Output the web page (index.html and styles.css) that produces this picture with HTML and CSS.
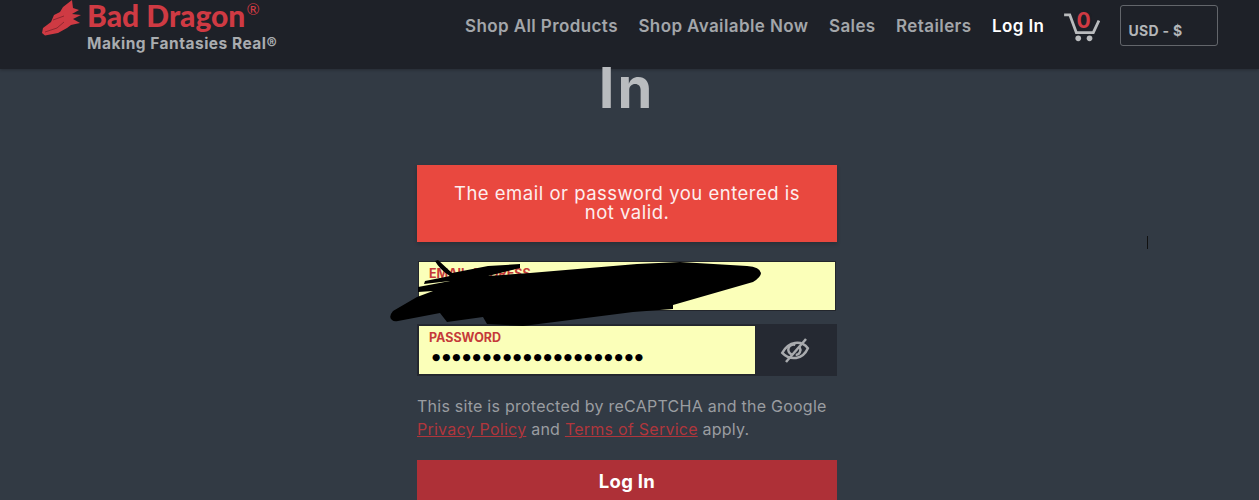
FILE: index.html
```html
<!DOCTYPE html>
<html lang="en">
<head>
<meta charset="utf-8">
<title>Log In</title>
<link rel="stylesheet" href="styles.css">
</head>
<body>
<header class="topbar">
  <a class="brand" href="#">
    <svg class="dragon" viewBox="0 0 40 36" aria-hidden="true"><path d="M32 0 L33 8 L39 10 L32 14 L41 15 L33 19 L40 23 L31 25 L27 28 L18 33 L5 35.5 L2 33 L3 28 L11 22 L14 15 L20 12 L23 7 Z"/><path class="dragon-line" d="M5 32 L17 28 L24 22 M13 20 L24 16"/></svg>
    <span class="brand-text">
      <span class="brand-name">Bad Dragon<span class="brand-reg">®</span></span>
      <span class="brand-tag">Making Fantasies Real®</span>
    </span>
  </a>
  <nav class="nav">
    <a href="#">Shop All Products</a>
    <a href="#">Shop Available Now</a>
    <a href="#">Sales</a>
    <a href="#">Retailers</a>
    <a class="nav-active" href="#">Log In</a>
  </nav>
  <a class="cart" href="#">
    <svg viewBox="0 0 38 34" aria-hidden="true"><path class="cart-line" d="M0 3 H6 L13 22 H31 L37 9"/><circle cx="15" cy="28" r="3"/><circle cx="27" cy="28" r="3"/></svg>
    <span class="cart-count">0</span>
  </a>
  <div class="currency">USD - $</div>
</header>
<main class="page">
  <h1 class="title">In</h1>
  <section class="form">
    <div class="alert">The email or password you entered is not valid.</div>
    <div class="fields">
      <div class="field"><label>EMAIL ADDRESS</label></div>
      <svg class="scribble" viewBox="0 0 380 70" aria-hidden="true"><path d="M50 1 L47 2 Q52 11 62 17 L37 22 L36 25 L62 22 L30 28 L30 33 L45 32 L29 38 L5 52 Q0 58 4 61 Q6 63 10 62 L52 54 L59 63 L95 58 L99 65 L135 67 L245 53 L285 50 L285 46 L365 23 Q373 18 373 14 Q372 8 359 7 L292 3 L249 5 L142 14 L100 17 L132 9 L132 5 L100 7 L64 14 Z"/></svg>
      <div class="field-row">
        <div class="field field-grow"><label>PASSWORD</label><span class="dots">●●●●●●●●●●●●●●●●●●●●●</span></div>
        <button class="eye" type="button" aria-label="Show password">
          <svg viewBox="0 0 30 28" aria-hidden="true"><g transform="rotate(-8 15 14)"><path d="M2 15 Q8 7 16 7 Q24 7 28 14 Q23 22 15 22 Q7 22 2 15 Z"/><path d="M11 18 A5 5 0 0 1 16 9 M20 12 A5 5 0 0 1 15 19"/></g><path d="M6 26 L26 3"/></svg>
        </button>
      </div>
    </div>
    <p class="notice">This site is protected by reCAPTCHA and the Google <a href="#">Privacy Policy</a> and <a href="#">Terms of Service</a> apply.</p>
    <button class="submit" type="button">Log In</button>
  </section>
</main>
<span class="cursor"></span>
</body>
</html>
```
FILE: styles.css
```css
* { box-sizing: border-box; }
html, body { height: 500px; overflow: hidden; }
body {
  margin: 0;
  padding-right: 5px;
  background: #323a44;
  font-family: "Inter", "Open Sans", sans-serif;
  color: #fff;
  position: relative;
}
a { color: inherit; text-decoration: none; }
.topbar {
  height: 69px;
  margin-right: -5px;
  background: #1e2128;
  display: flex;
  align-items: center;
  padding: 0 0 18px 40px;
  box-shadow: 0 1px 3px rgba(0,0,0,.25);
}
.brand { display: flex; align-items: flex-start; align-self: flex-start; width: 425px; height: 69px; }
.dragon { width: 40px; height: 36px; fill: #cf3a43; flex: none; overflow: visible; }
.dragon-line { fill: none; stroke: #8f2730; stroke-width: 1; }
.brand-text { display: flex; flex-direction: column; margin-left: 7px; }
.brand-name { font-family: "Lato", sans-serif; font-weight: 900; font-size: 30px; line-height: 30px; color: #cf3a43; white-space: nowrap; }
.brand-reg { position: absolute; font-size: 16px; font-weight: 400; line-height: 18px; margin: 0 0 0 1px; top: 0; }
.brand-tag { font-weight: 700; font-size: 15.5px; letter-spacing: 0.5px; line-height: 18px; color: #a9acaf; margin-top: 5px; white-space: nowrap; }
.nav { display: flex; gap: 20.5px; font-weight: 600; font-size: 17px; letter-spacing: 0.4px; color: #a3a6aa; white-space: nowrap; }
.nav-active { color: #fff; }
.cart { position: relative; width: 36px; height: 32px; margin: 4px 0 0 20px; flex: none; }
.cart svg { width: 36px; height: 32px; fill: #b9bbbd; display: block; }
.cart-line { fill: none; stroke: #b9bbbd; stroke-width: 3; }
.cart-count { position: absolute; left: 12px; top: -4px; font-weight: 700; font-size: 21px; line-height: 25px; color: #cf3a43; text-shadow: 0 0 2px #1e2128, 0 0 2px #1e2128; }
.currency {
  width: 98px;
  height: 41px;
  margin-left: 20px;
  border: 1px solid #63666b;
  border-radius: 3px;
  padding: 16px 0 0 7px;
  font-size: 14px;
  letter-spacing: 0.3px;
  line-height: 18px;
  font-weight: 700;
  color: #b4b6b8;
  flex: none;
}
.page { display: flex; flex-direction: column; align-items: center; }
.title { margin: -7px 0 0; font-size: 56px; line-height: 52px; letter-spacing: 3px; font-weight: 700; color: #b9bcbf; height: 103px; }
.form { width: 420px; }
.alert {
  background: #e9483f;
  height: 77px;
  padding: 19px 30px 0;
  text-align: center;
  font-size: 18.5px;
  letter-spacing: 0.5px;
  line-height: 19px;
  color: #fdeeee;
  box-shadow: 0 2px 4px rgba(0,0,0,.2);
}
.fields { position: relative; margin-top: 19px; display: flex; flex-direction: column; gap: 13px; }
.field {
  height: 50px;
  margin: 0 1px;
  background: #fbffb9;
  border: 1px solid #23262c;
  padding: 4px 10px;
  display: block;
}
.field label { display: block; font-size: 12.5px; line-height: 15px; font-weight: 700; color: #c53a3a; }
.field-row { display: flex; height: 52px; background: #252932; }
.field-row .field { margin: 1px 0 1px 1px; }
.field-grow { flex: 1; }
.dots { display: block; font-size: 9.5px; line-height: 21px; letter-spacing: 1.85px; color: #000; font-family: "DejaVu Sans", sans-serif; margin: 1px 0 0 3px; white-space: nowrap; }
.eye { width: 81px; border: 0; background: transparent; padding: 0 3px 0 0; display: flex; align-items: center; justify-content: center; flex: none; }
.eye svg { width: 30px; height: 28px; fill: none; stroke: #a9abae; stroke-width: 2.5; }
.scribble { position: absolute; left: -29px; top: -2px; width: 380px; height: 70px; fill: #000; }
.notice { margin: 19px 0 0; font-size: 16px; letter-spacing: 0.25px; line-height: 23px; color: #9a9da1; }
.notice a { color: #b0363c; text-decoration: underline; }
.submit {
  display: block;
  width: 100%;
  height: 42px;
  margin-top: 19px;
  border: 0;
  background: #ae3037;
  color: #fff;
  font-family: inherit;
  font-size: 18.5px;
  letter-spacing: 0.3px;
  font-weight: 700;
}
.cursor { position: absolute; left: 1147px; top: 236px; width: 1px; height: 13px; background: #111; }
```
